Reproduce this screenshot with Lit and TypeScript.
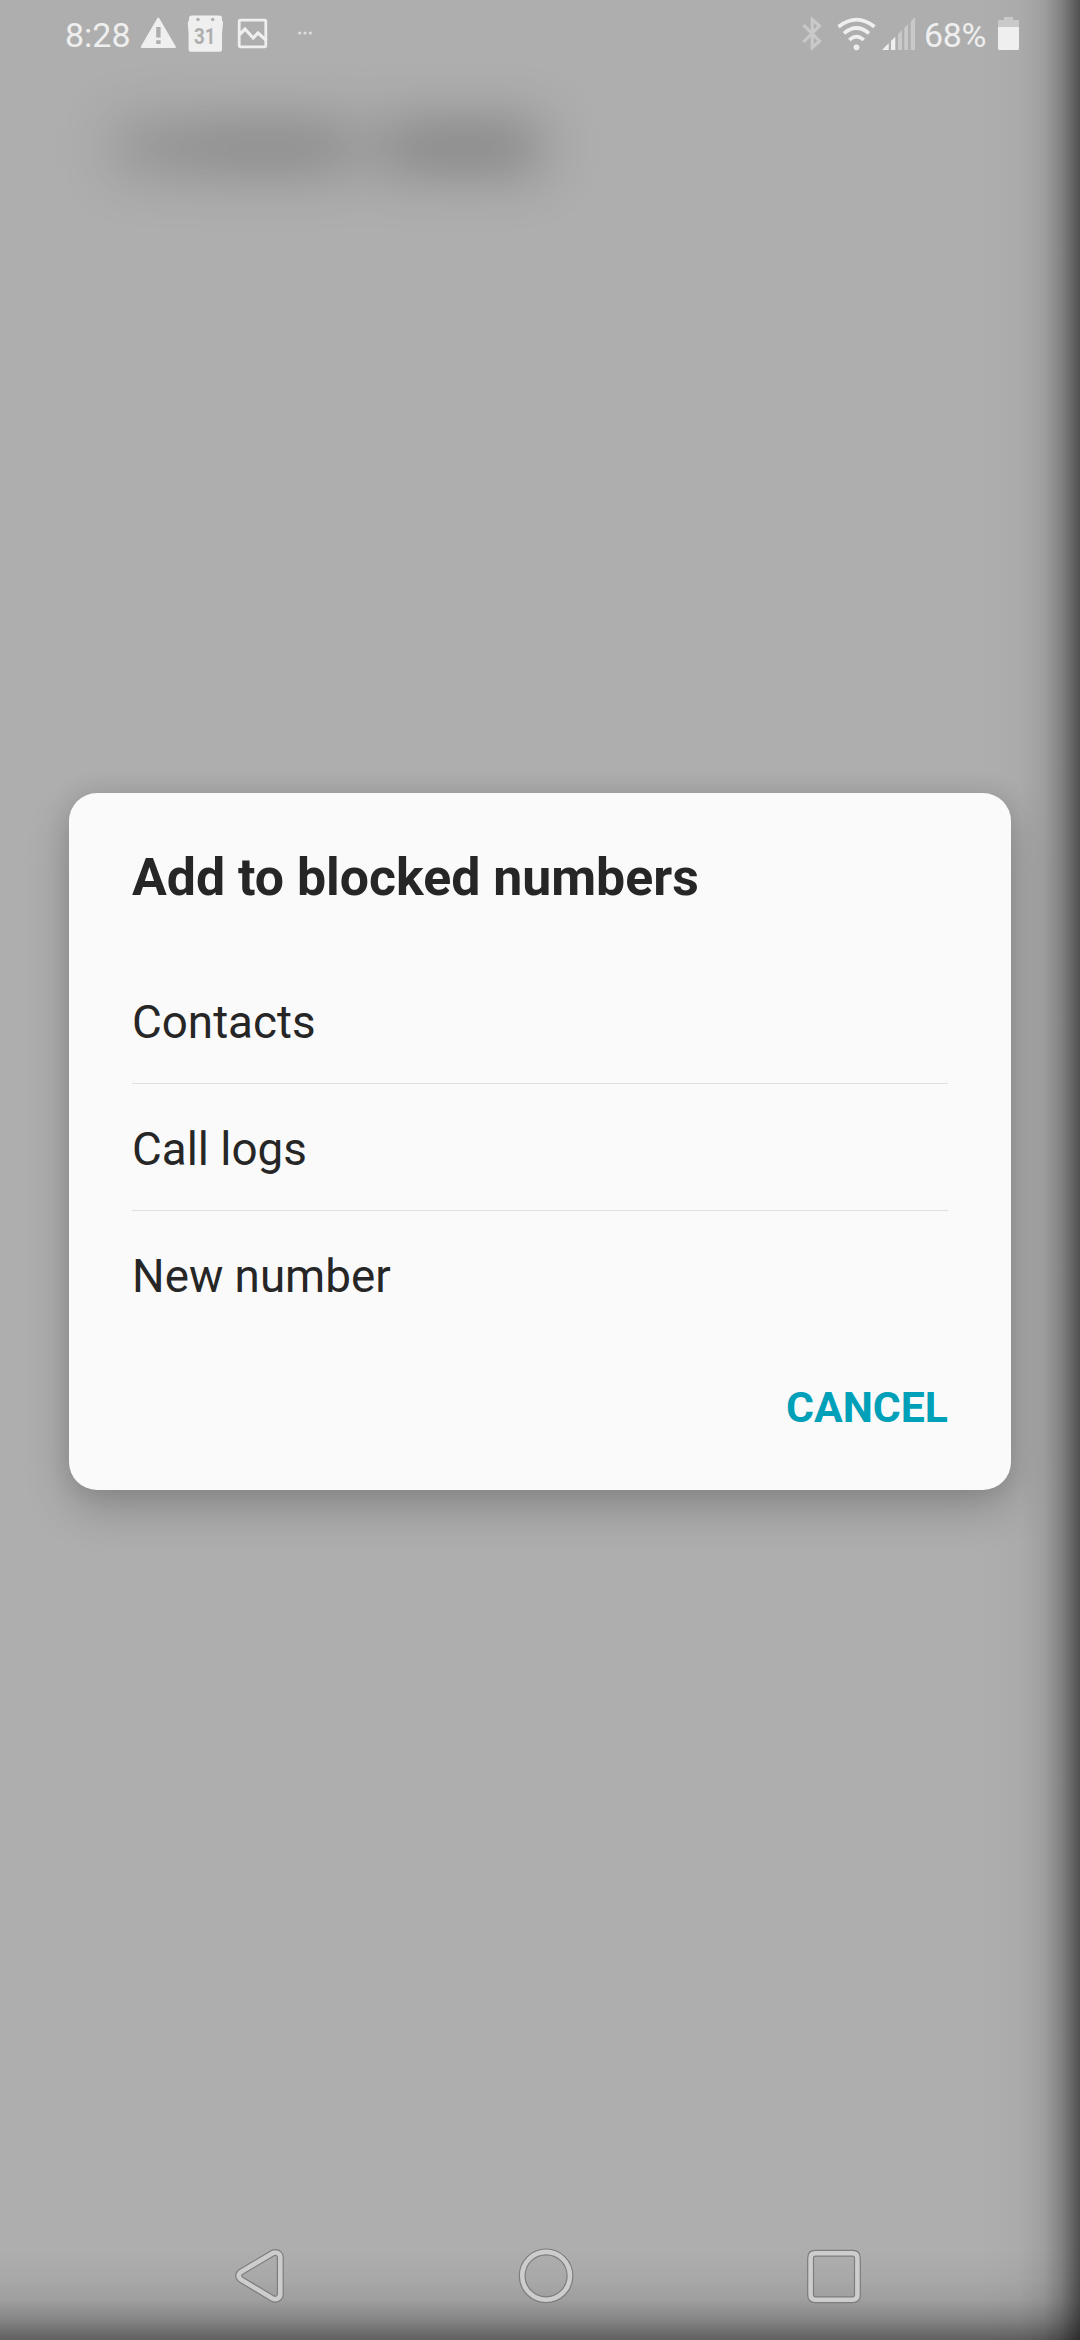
import { LitElement, html, css, svg } from "lit";
import { customElement, property } from "lit/decorators.js";

@customElement("status-bar")
class StatusBar extends LitElement {
  @property() time = "";
  @property() battery = "";

  static styles = css`
    :host {
      display: flex;
      justify-content: space-between;
      height: 68px;
      padding: 0 60px 0 65px;
      color: #efefef;
      font: 34px/70px Roboto, sans-serif;
    }
    .group {
      display: flex;
      align-items: flex-start;
    }
    svg {
      display: block;
      flex: none;
    }
    .time {
      width: 75px;
    }
    .level {
      width: 73px;
      margin-left: 9px;
      letter-spacing: -0.3px;
    }
    .day {
      font: 700 22px Roboto, sans-serif;
      fill: #aeaeae;
    }
    .warning { margin-right: 10px; }
    .calendar { margin-right: 13px; }
    .image { margin-right: 29px; }
    .bluetooth { margin-right: 13px; }
    .wifi { margin-right: 4px; }
  `;

  render() {
    return html`
      <div class="group">
        <span class="time">${this.time}</span>
        <svg class="warning" width="37" height="68" viewBox="140 0 37 68">
          <path d="M158.3 18.6 174.9 47H141.7Z" fill="#efefef" stroke="#efefef" stroke-width="2" stroke-linejoin="round" />
          <path d="M156.2 27h4.4v10.4h-4.4zM156.2 40.2h4.4v3.8h-4.4z" fill="#aeaeae" />
        </svg>
        <svg class="calendar" width="37" height="68" viewBox="187 0 37 68">
          <path d="M192 15.4H219.500Q222 15.400 222 18V20.500Q223.200 21 223 23.500L222 34V49.500Q222 51.700 220 51.700H190.500Q188.600 51.700 188.600 49.500V34L187.800 23.500Q187.700 21 189 20.500V18Q189.300 15.400 192 15.400Z" fill="#efefef" />
          <circle cx="198" cy="19.500" r="1.700" fill="#aeaeae" />
          <circle cx="212.700" cy="19.500" r="1.700" fill="#aeaeae" />
          <text class="day" x="194" y="44.200" textLength="21.500" lengthAdjust="spacingAndGlyphs">31</text>
        </svg>
        <svg class="image" width="31" height="68" viewBox="237 0 31 68">
          <rect x="239.200" y="20.200" width="26.600" height="26.600" rx="1" fill="none" stroke="#efefef" stroke-width="2.800" />
          <path d="M239.500 34.500 245 29 253.200 38 258 33 266.500 40.500" fill="none" stroke="#efefef" stroke-width="3.200" />
        </svg>
        <svg width="16" height="68" viewBox="296 0 16 68">
          <g fill="#dedede">
            <circle cx="298.700" cy="33" r="1.600" />
            <circle cx="304" cy="33" r="1.600" />
            <circle cx="309.300" cy="33" r="1.600" />
          </g>
        </svg>
      </div>
      <div class="group">
        <svg class="bluetooth" width="22" height="68" viewBox="801 0 22 68">
          <path d="M803.500 25 819.500 41.200 812.300 47.500V19.500L819.500 25.800 803.500 42" fill="none" stroke="#c9c9c9" stroke-width="3.200" />
        </svg>
        <svg class="wifi" width="41" height="68" viewBox="836 0 41 68">
          <g fill="none" stroke="#efefef" stroke-width="3.700">
            <path d="M838.500 26.700Q856.500 12.500 874.500 26.700" />
            <path d="M844 33.300Q856.500 22.700 869 33.300" />
            <path d="M849.300 40Q856.500 33.300 863.700 40" />
          </g>
          <circle cx="856.500" cy="47.300" r="2.900" fill="#efefef" />
        </svg>
        <svg width="34" height="68" viewBox="881 0 34 68">
          <path d="M882 50 888.700 43.300V50ZM891 41 895.300 36.700V50H891Z" fill="#efefef" />
          <path d="M898 34.200 902 30.200V50H898ZM904.300 27.900 908 24.200V50H904.300ZM910.700 21.500 915 17.200V50H910.700Z" fill="#c9c9c9" />
        </svg>
        <span class="level">${this.battery}</span>
        <svg width="23" height="68" viewBox="998 0 23 68">
          <path d="M1005 17H1014V20H1020V27H999V20H1005Z" fill="#c9c9c9" />
          <path d="M999 27H1020V48.500Q1020 50 1018.500 50H1000.500Q999 50 999 48.500Z" fill="#efefef" />
        </svg>
      </div>
    `;
  }
}

@customElement("blocked-dialog")
class BlockedDialog extends LitElement {
  @property() heading = "";
  @property({ attribute: false }) options: string[] = [];

  static styles = css`
    :host {
      display: flex;
      flex-direction: column;
      box-sizing: border-box;
      height: 697px;
      margin: 0 69px;
      padding: 45px 63px 0;
      border-radius: 28px;
      background: #fafafa;
      color: #262626;
      font-family: Roboto, sans-serif;
      box-shadow: 0 20px 45px rgba(0, 0, 0, 0.2), 0 0 25px rgba(0, 0, 0, 0.1);
    }
    h1 {
      margin: 0 0 39px;
      font-size: 51.8px;
      line-height: 80px;
      font-weight: 700;
    }
    ul {
      margin: 0;
      padding: 0;
      list-style: none;
    }
    li {
      box-sizing: border-box;
      height: 127px;
      padding-top: 3px;
      border-bottom: 1px solid #e0e0e0;
      font-size: 45.75px;
      line-height: 126px;
    }
    li:last-child {
      border-bottom: 0;
    }
    button {
      align-self: flex-end;
      margin: 29px 0 0;
      padding: 0;
      border: 0;
      background: none;
      color: #00a0b9;
      font: 700 42.75px/80px Roboto, sans-serif;
    }
  `;

  render() {
    return html`
      <h1>${this.heading}</h1>
      <ul>
        ${this.options.map((o) => html`<li>${o}</li>`)}
      </ul>
      <button>CANCEL</button>
    `;
  }
}

@customElement("nav-bar")
class NavBar extends LitElement {
  static styles = css`
    :host {
      display: flex;
      justify-content: space-between;
      padding: 0 218px 35px 233px;
    }
    svg {
      display: block;
    }
    .edge {
      fill: none;
      stroke: #7d7d7d;
      stroke-width: 7;
    }
    .line {
      fill: none;
      stroke: #cdcdcd;
      stroke-width: 4.6;
    }
  `;

  private outlined(d: string) {
    return svg`<path class="edge" d=${d} /><path class="line" d=${d} />`;
  }

  render() {
    return html`
      <svg width="54" height="58" viewBox="233 2247 54 58">
        ${this.outlined("M272.500 2253.200Q275 2251.800 277.700 2253Q280.300 2254.600 280.300 2257.500V2294Q280.300 2297 277.700 2298.600Q275 2299.800 272.500 2298.400L241.300 2279.800Q238.700 2278.200 238.700 2275.800Q238.700 2273.400 241.300 2271.800Z")}
      </svg>
      <svg width="58" height="58" viewBox="517.500 2247 58 58">
        ${this.outlined("M522.700 2275.800a23.900 23.900 0 1 0 47.800 0a23.900 23.900 0 1 0 -47.800 0Z")}
      </svg>
      <svg width="58" height="58" viewBox="804 2246.500 58 58">
        ${this.outlined("M815.500 2252.800H852.500Q857.400 2252.800 857.400 2257.700V2294.300Q857.400 2299.200 852.500 2299.200H815.500Q810.600 2299.200 810.600 2294.300V2257.700Q810.600 2252.800 815.500 2252.800Z")}
      </svg>
    `;
  }
}

@customElement("app-root")
class AppRoot extends LitElement {
  static styles = css`
    :host {
      display: block;
    }
    .screen {
      position: relative;
      display: grid;
      grid-template-rows: 68px 725px 1fr auto;
      width: 1080px;
      height: 2340px;
      overflow: hidden;
      background: #aeaeae;
    }
    .backdrop {
      display: flex;
      align-items: flex-start;
      padding: 56px 0 0 116px;
      filter: blur(28px);
    }
    .smudge {
      height: 46px;
      background: #000;
    }
    .a { width: 79px; opacity: 0.19; }
    .b { width: 150px; opacity: 0.24; }
    .c { width: 45px; opacity: 0.1; }
    .d { width: 150px; opacity: 0.27; }
    .shade {
      position: absolute;
      inset: 0;
      pointer-events: none;
      background:
        linear-gradient(to right, transparent 980px, rgba(0, 0, 0, 0.02) 1020px, rgba(0, 0, 0, 0.09) 1044px, rgba(0, 0, 0, 0.25) 1061px, rgba(0, 0, 0, 0.54) 1080px),
        linear-gradient(to bottom, transparent 2250px, rgba(0, 0, 0, 0.035) 2280px, rgba(0, 0, 0, 0.09) 2300px, rgba(0, 0, 0, 0.24) 2320px, rgba(0, 0, 0, 0.45) 2340px);
    }
    status-bar,
    blocked-dialog,
    nav-bar {
      position: relative;
      z-index: 1;
    }
    blocked-dialog {
      align-self: start;
    }
  `;

  render() {
    return html`
      <main class="screen">
        <status-bar time="8:28" battery="68%"></status-bar>
        <div class="backdrop">
          <span class="smudge a"></span>
          <span class="smudge b"></span>
          <span class="smudge c"></span>
          <span class="smudge d"></span>
        </div>
        <blocked-dialog
          heading="Add to blocked numbers"
          .options=${["Contacts", "Call logs", "New number"]}
        ></blocked-dialog>
        <nav-bar></nav-bar>
        <div class="shade"></div>
      </main>
    `;
  }
}
